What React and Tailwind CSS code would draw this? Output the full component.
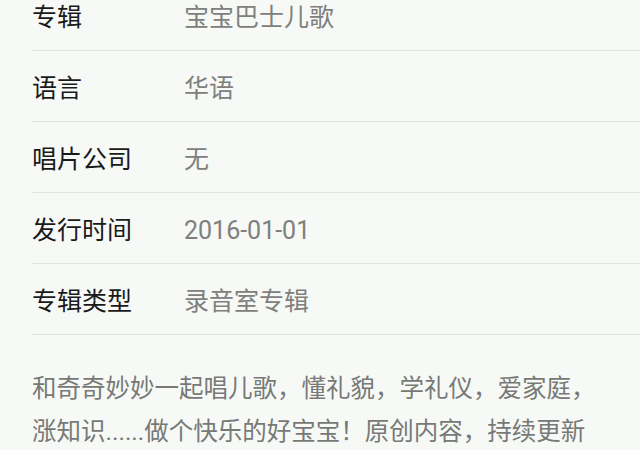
export default function App() {
  const rows = [
    ["专辑", "宝宝巴士儿歌"],
    ["语言", "华语"],
    ["唱片公司", "无"],
    ["发行时间", "2016-01-01"],
    ["专辑类型", "录音室专辑"],
  ];
  return (
    <div
      className="w-[640px] h-[450px] overflow-hidden bg-[#f6f9f5]"
      style={{ fontFamily: 'Roboto, "Noto Sans CJK SC", sans-serif' }}
    >
      <div className="mt-[-20px] pl-8">
        {rows.map(([k, v]) => (
          <div key={k} className="flex items-center pt-[4px] h-[71px] border-b border-[#e1e4e0]">
            <div className="w-[152px] text-[25px] text-[#1a1a1a] leading-none">{k}</div>
            <div className="text-[25px] text-[#7f807e] leading-none">{v}</div>
          </div>
        ))}
      </div>
      <p className="pl-8 pr-[40px] pt-[32px] text-[24.5px] leading-[43px] text-[#787977]">
        和奇奇妙妙一起唱儿歌，懂礼貌，学礼仪，爱家庭，涨知识......做个快乐的好宝宝！原创内容，持续更新
      </p>
    </div>
  );
}
